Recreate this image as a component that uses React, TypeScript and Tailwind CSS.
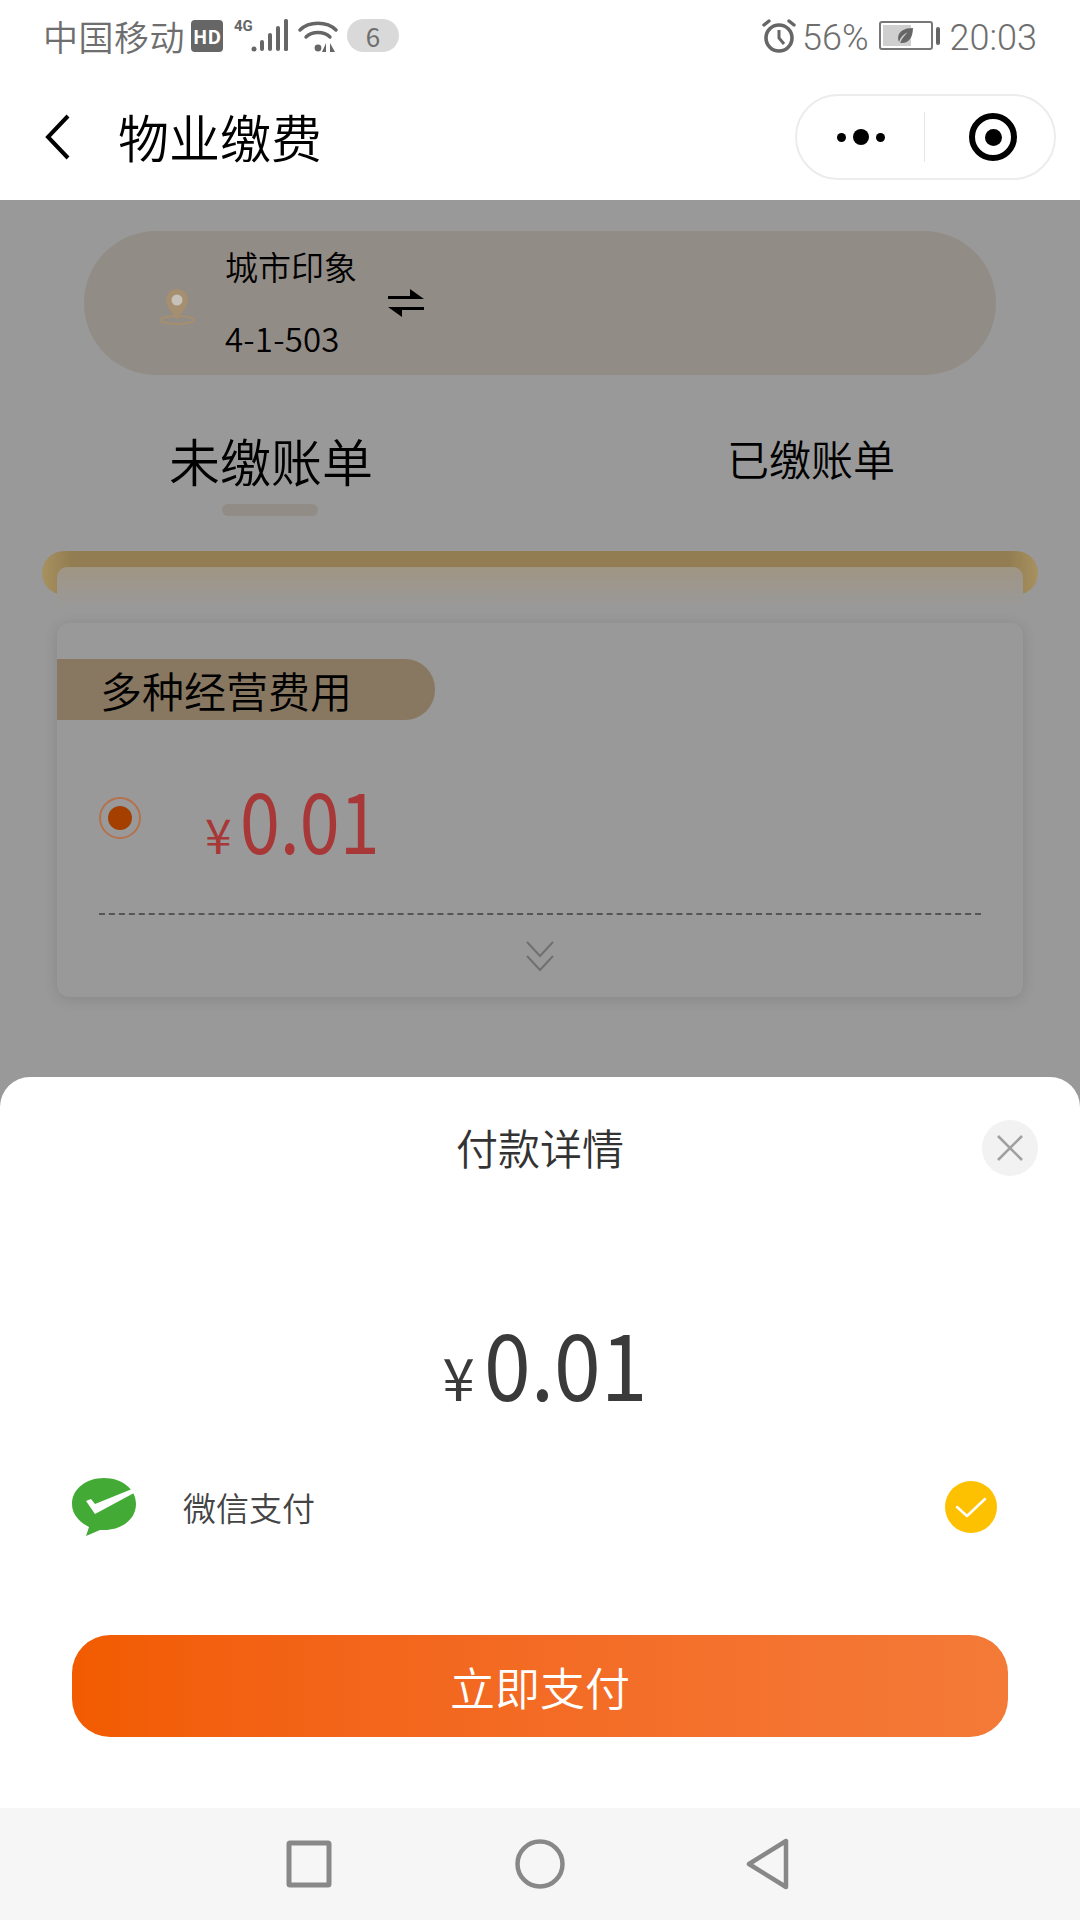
const cjk = "font-['Noto_Sans_CJK_SC','Noto_Sans',sans-serif]";

function StatusBar() {
  return (
    <div className="flex h-[76px] items-center justify-between pb-[5px] pl-[43px] pr-[43px] text-[#6e6e6e]">
      <div className="flex items-center">
        <span className="text-[35px] font-[350] leading-none tracking-[0.5px]">中国移动</span>
        <span className="ml-[6px] flex h-[32px] w-[32px] items-center justify-center rounded-[4px] bg-[#666] text-[19px] font-bold leading-none text-white">
          HD
        </span>
        <svg viewBox="0 0 56 36" className="ml-[11px] h-[36px] w-[56px]" fill="#666">
          <text x="0" y="13" fontSize="15" fontWeight="700" fontFamily="'Liberation Sans Narrow','Roboto',sans-serif">
            4G
          </text>
          <circle cx="20" cy="31" r="2.5" />
          <rect x="26" y="22" width="4" height="11" rx="2" />
          <rect x="34" y="15" width="4" height="18" rx="2" />
          <rect x="42" y="8" width="4" height="25" rx="2" />
          <rect x="50" y="1" width="4" height="32" rx="1.5" />
        </svg>
        <svg viewBox="0 0 40 34" className="ml-[8px] h-[34px] w-[40px]" fill="none" stroke="#666" strokeWidth="3.4">
          <path d="M2 11C11 2 29 2 38 11" strokeLinecap="round" />
          <path d="M8 18C14 12 26 12 32 18" strokeLinecap="round" />
          <circle cx="20" cy="29" r="3.4" fill="#666" stroke="none" />
          <path d="M28 33V24L24 33ZM32 24V33L37 33Z" fill="#666" stroke="none" />
        </svg>
        <span className="ml-[9px] flex h-[33px] w-[52px] items-center justify-center rounded-full bg-[#d9d9d9] text-[26px] leading-none">
          6
        </span>
      </div>
      <div className="flex items-center">
        <svg viewBox="0 0 34 34" className="h-[34px] w-[34px]" fill="none" stroke="#666">
          <circle cx="17" cy="19" r="13" strokeWidth="3.6" />
          <path d="M17 11V19L22 25" strokeWidth="3" />
          <path d="M2 6L7 2M32 6L27 2" strokeWidth="3.4" strokeLinecap="round" />
        </svg>
        <span className="ml-[6px] pt-[4px] font-['Roboto'] text-[36px] font-light leading-none">56%</span>
        <div className="relative ml-[10px] h-[29px] w-[54px] rounded-[3px] border-[2px] border-[#777] p-[2px]">
          <div className="h-full w-[62%] bg-[#cfcfcf]" />
          <svg viewBox="0 0 16 16" className="absolute left-[16px] top-[4px] h-[17px] w-[17px]" fill="#666">
            <path d="M15 1C7 1 1 4 1 11C1 12 1.5 13 2 14C3 10 6 7 10 5C7 8 4.5 11 3 15C11 16 15 10 15 1Z" />
          </svg>
        </div>
        <div className="ml-[3px] h-[18px] w-[4px] rounded-full bg-[#666]" />
        <span className="ml-[10px] pt-[4px] font-['Roboto'] text-[36px] font-light leading-none">20:03</span>
      </div>
    </div>
  );
}

function NavBar() {
  return (
    <div className="flex h-[124px] items-center justify-between pb-[2px] pl-[42px] pr-[24px]">
      <div className="flex items-center">
        <svg viewBox="0 0 30 48" className="h-[48px] w-[30px]" fill="none" stroke="#000" strokeWidth="4">
          <path d="M26 3L6 24L26 45" />
        </svg>
        <span className="ml-[46px] pb-[2px] text-[51px] font-[350] leading-none text-black">物业缴费</span>
      </div>
      <div className="flex h-[86px] w-[261px] items-center rounded-full border-[2px] border-[#ececec]">
        <div className="flex w-[127px] items-center justify-center gap-[7px]">
          <span className="h-[9px] w-[9px] rounded-full bg-black" />
          <span className="h-[16px] w-[16px] rounded-full bg-black" />
          <span className="h-[9px] w-[9px] rounded-full bg-black" />
        </div>
        <div className="h-[50px] w-px bg-[#e5e5e5]" />
        <div className="flex flex-1 items-center justify-center pl-[7px]">
          <span className="flex h-[48px] w-[48px] items-center justify-center rounded-full border-[6px] border-black">
            <span className="h-[17px] w-[17px] rounded-full bg-black" />
          </span>
        </div>
      </div>
    </div>
  );
}

function DimmedPage() {
  return (
    <div className="h-[907px] overflow-hidden bg-[#999999] pt-[31px] text-black">
      <div className="mx-[84px] flex h-[144px] items-center rounded-full bg-[#928c86]">
        <svg viewBox="0 0 36 36" className="ml-[75px] mt-[8px] h-[36px] w-[36px]" fill="none">
          <ellipse cx="18" cy="31" rx="17" ry="4" stroke="#a58f6f" strokeWidth="2" />
          <path d="M18 0C12 0 7 5 7 11C7 17 14 24 18 31C22 24 29 17 29 11C29 5 24 0 18 0Z" fill="#a58f6f" />
          <circle cx="18" cy="11" r="5.5" fill="#c6c2ba" />
        </svg>
        <div className="ml-[30px] flex flex-col gap-[36px] pb-[3px]">
          <span className="text-[33px] font-[350] leading-[36px]">城市印象</span>
          <span className="text-[33px] font-[350] leading-[36px] tracking-[0.2px]">4-1-503</span>
        </div>
        <svg viewBox="0 0 36 28" className="ml-[31px] h-[28px] w-[36px]" fill="#000">
          <path d="M0 10H36L22 0V7H0ZM0 18H36V21H14V28L0 18Z" />
        </svg>
      </div>
      <div className="relative mt-[45px] h-[90px]">
        <span className="absolute left-[169px] top-[5px] text-[51px] font-[350] leading-[70px]">未缴账单</span>
        <span className="absolute left-[727px] top-[8px] text-[42px] font-[350] leading-[60px]">已缴账单</span>
        <span className="absolute left-[222px] top-[84px] h-[12px] w-[96px] rounded-full bg-[#928c86]" />
      </div>
      <div className="relative mx-[42px] mt-[41px] h-[44px] rounded-full bg-[linear-gradient(to_right,#a8915f,#927d52_3%,#927d52_97%,#a8915f)]">
        <div className="absolute left-[15px] right-[15px] top-[16px] h-[40px] rounded-t-[10px] bg-gradient-to-b from-[#a09583] to-[#999999]" />
      </div>
      <div className="relative mx-[57px] mt-[28px] h-[374px] rounded-[12px] bg-[#999999] pt-[36px] shadow-[0_2px_14px_rgba(0,0,0,0.12)]">
        <div className="flex h-[61px] w-[378px] items-center rounded-r-[30px] bg-[#897861] pl-[43px]">
          <span className="text-[42px] font-[350] leading-none">多种经营费用</span>
        </div>
        <div className="mt-[56px] flex h-[84px] items-center pl-[42px]">
          <span className="flex h-[42px] w-[42px] items-center justify-center rounded-full border-[2px] border-[#b5714c]">
            <span className="h-[24px] w-[24px] rounded-full bg-[#a43f00]" />
          </span>
          <span className="ml-[64px] flex items-baseline text-[#a83737]">
            <span className="text-[48px] leading-none">¥</span>
            <span className="ml-[8px] origin-left scale-x-[0.855] text-[84px] leading-none">0.01</span>
          </span>
        </div>
        <div className="mx-[42px] mt-[53px] border-t-[2px] border-dashed border-[#555]" />
        <div className="mt-[25px] flex justify-center">
          <svg viewBox="0 0 30 32" className="h-[32px] w-[30px]" fill="none" stroke="#707070" strokeWidth="2">
            <path d="M2 2L15 16L28 2M2 16L15 30L28 16" />
          </svg>
        </div>
      </div>
    </div>
  );
}

function PaySheet() {
  return (
    <div className="relative -mt-[30px] h-[731px] rounded-t-[30px] bg-white">
      <div className="pt-[40px] text-center text-[42px] font-[350] leading-[60px] text-[#333]">付款详情</div>
      <button className="absolute right-[42px] top-[43px] flex h-[56px] w-[56px] items-center justify-center rounded-full bg-[#f2f2f2]">
        <svg viewBox="0 0 28 28" className="h-[28px] w-[28px]" fill="none" stroke="#a0a0a0" strokeWidth="2.6">
          <path d="M2 2L26 26M26 2L2 26" />
        </svg>
      </button>
      <div className="mt-[138px] flex items-baseline justify-center pl-[4px] text-[#3a3a3a]">
        <span className="text-[58px] leading-none">¥</span>
        <span className="ml-[9px] w-[158px] origin-left scale-x-[0.915] whitespace-nowrap text-[92px] leading-none">0.01</span>
      </div>
      <div className="mt-[60px] flex h-[80px] items-center pl-[71px] pr-[83px]">
        <svg viewBox="0 0 66 60" className="h-[60px] w-[66px]">
          <path d="M33 1C15 1 1 12 1 27C1 37 8 45 18 50L15 59L29 53C30 53 32 53 33 53C51 53 65 42 65 27C65 12 51 1 33 1Z" fill="#43aa36" />
          <path d="M15 24L20 22L24 27L61 12L63 16L24 37Z" fill="#fff" />
        </svg>
        <span className="ml-[46px] text-[33px] font-[350] leading-none text-[#444]">微信支付</span>
        <span className="ml-auto flex h-[52px] w-[52px] items-center justify-center rounded-full bg-[#fdc101]">
          <svg viewBox="0 0 34 26" className="h-[26px] w-[34px]" fill="none" stroke="#fff" strokeWidth="2.5" strokeLinecap="round" strokeLinejoin="round">
            <path d="M3 13L13 22L31 5" />
          </svg>
        </span>
      </div>
      <div className="mx-[72px] mt-[88px] flex h-[102px] items-center justify-center rounded-[38px] bg-gradient-to-r from-[#f25b00] to-[#f47a38] text-[45px] font-[350] leading-none text-white">
        立即支付
      </div>
    </div>
  );
}

function SystemNav() {
  return (
    <div className="flex h-[112px] items-center bg-[#f6f6f6] pl-[286px]">
      <svg viewBox="0 0 46 50" className="h-[50px] w-[46px]" fill="none" stroke="#888" strokeWidth="5" strokeLinejoin="round">
        <rect x="3" y="4" width="40" height="42" rx="1" />
      </svg>
      <svg viewBox="0 0 50 50" className="ml-[183px] h-[50px] w-[50px]" fill="none" stroke="#888" strokeWidth="4.5">
        <circle cx="25" cy="25" r="22.5" />
      </svg>
      <svg viewBox="0 0 44 52" className="ml-[181px] h-[52px] w-[44px]" fill="none" stroke="#888" strokeWidth="4.5" strokeLinejoin="round">
        <path d="M40 3V49L3 26Z" />
      </svg>
    </div>
  );
}

export default function App() {
  return (
    <div className={`flex h-[1920px] w-[1080px] flex-col overflow-hidden bg-white ${cjk}`}>
      <StatusBar />
      <NavBar />
      <DimmedPage />
      <PaySheet />
      <SystemNav />
    </div>
  );
}
